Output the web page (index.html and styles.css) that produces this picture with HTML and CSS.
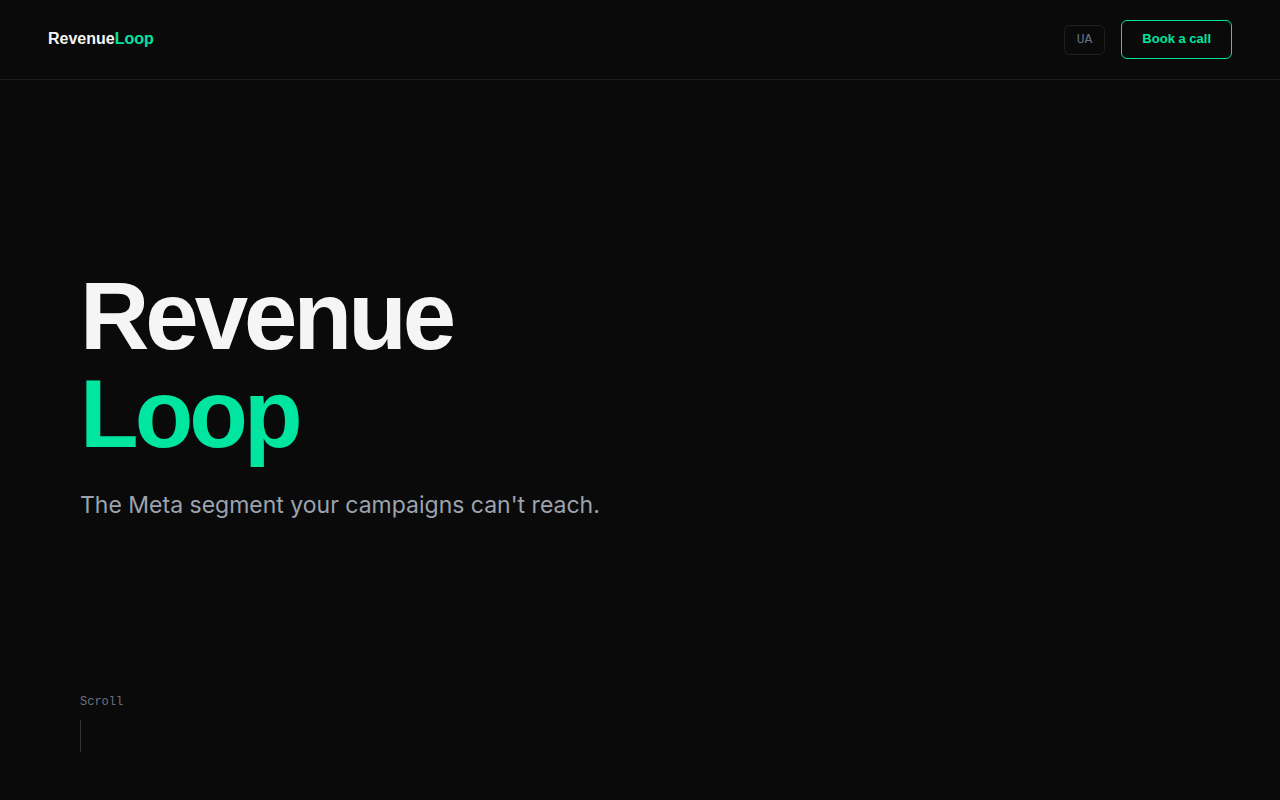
FILE: index.html
```html
<!DOCTYPE html>
<html lang="en">
<head>
<meta charset="utf-8">
<meta name="viewport" content="width=device-width, initial-scale=1">
<title>RevenueLoop</title>
<link rel="stylesheet" href="styles.css">
</head>
<body>
<header class="nav">
  <a class="brand" href="#">Revenue<span class="accent">Loop</span></a>
  <div class="actions">
    <button class="lang" type="button">UA</button>
    <a class="cta" href="#call">Book a call</a>
  </div>
</header>
<main class="hero">
  <div class="intro">
    <h1 class="title">Revenue<br><span class="accent">Loop</span></h1>
    <p class="tagline">The Meta segment your campaigns can't reach.</p>
  </div>
  <div class="scroll">Scroll<span class="rule"></span></div>
</main>
</body>
</html>
```
FILE: styles.css
```css
* { box-sizing: border-box; }
body {
  margin: 0;
  min-height: 100vh;
  display: flex;
  flex-direction: column;
  background: #0a0a0a;
  color: #f5f5f5;
  font-family: "Liberation Sans", Arial, sans-serif;
}
a { text-decoration: none; color: inherit; }
.accent { color: #00e5a0; }
.nav {
  display: flex;
  align-items: center;
  justify-content: space-between;
  padding: 20px 48px;
  border-bottom: 1px solid #1f1f1f;
}
.brand { padding-bottom: 2px; font-size: 16px; line-height: 24px; font-weight: 700; }
.actions { display: flex; align-items: center; gap: 16px; }
.lang {
  padding: 6px 12px;
  border: 1px solid #1f1f1f;
  border-radius: 6px;
  background: transparent;
  color: #6b7280;
  font: 13px/16px "Liberation Mono", monospace;
}
.cta {
  padding: 9px 20px 11px;
  border: 1px solid #00e5a0;
  border-radius: 6px;
  color: #00e5a0;
  font-size: 13px;
  line-height: 17px;
  font-weight: 700;
}
.hero {
  flex: 1;
  display: flex;
  flex-direction: column;
  padding: 0 80px 48px;
}
.intro { flex: 1; display: flex; flex-direction: column; justify-content: center; padding-top: 16px; }
.title { margin: 0; font-size: 96px; line-height: 98px; font-weight: 700; letter-spacing: -4px; }
.tagline { margin: 24px 0 0; color: #9ca3af; font: 23px/36px Inter, sans-serif; }
.scroll {
  display: flex;
  flex-direction: column;
  align-items: flex-start;
  gap: 10px;
  color: #6b7280;
  font: 12px/16px "Liberation Mono", monospace;
}
.rule { width: 1px; height: 32px; background: #333333; }
```
